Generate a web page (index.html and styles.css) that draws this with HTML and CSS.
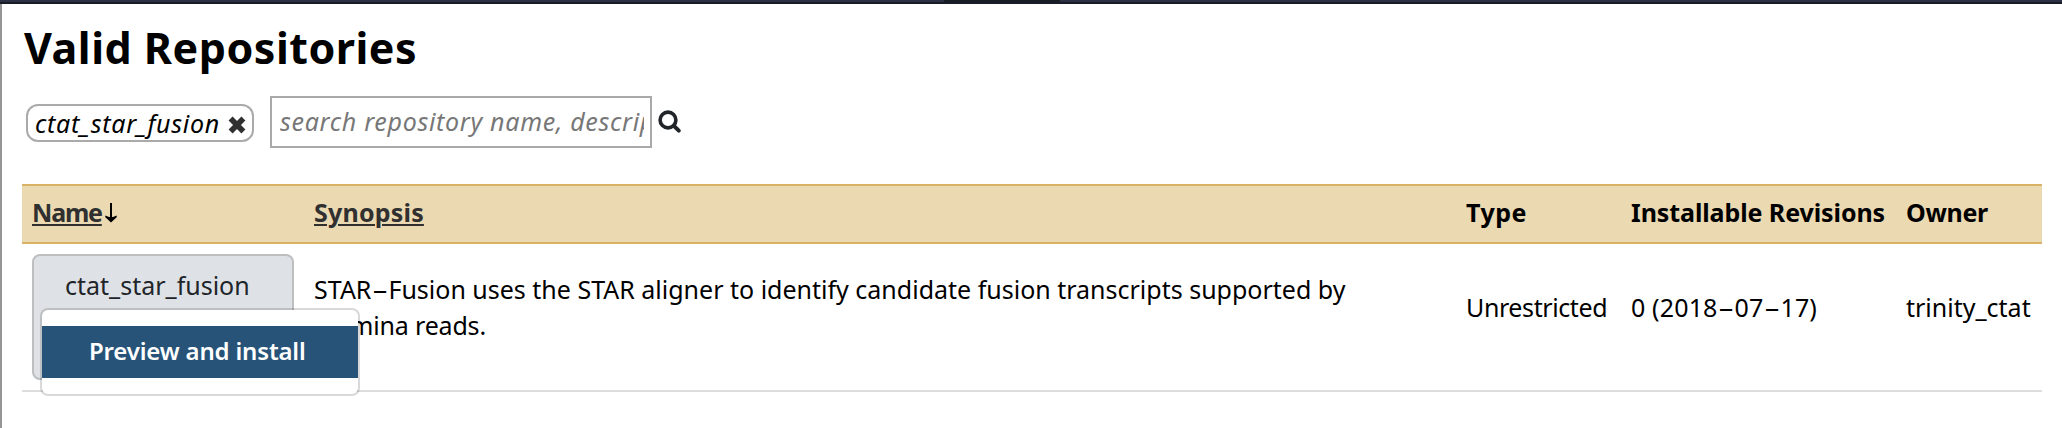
FILE: index.html
```
<!DOCTYPE html>
<html lang="en">
<head>
<meta charset="utf-8">
<title>Valid Repositories</title>
<link rel="stylesheet" href="styles.css">
</head>
<body>
<header class="masthead"><span class="masthead-tab"></span></header>
<main class="panel">
  <h2 class="title">Valid Repositories</h2>
  <div class="filters">
    <span class="tag"><span class="tag-text">ctat_star_fusion</span>
      <svg class="tag-close" viewBox="0 0 16 16"><path d="M2.3 2.3L13.7 13.7M13.7 2.3L2.3 13.7" stroke="#303030" stroke-width="5"/></svg>
    </span>
    <input class="search" type="text" placeholder="search repository name, description">
    <svg class="search-icon" viewBox="0 0 24 24"><circle cx="10" cy="10" r="7.9" fill="none" stroke="#212529" stroke-width="3.6"/><path d="M15.8 15.8L20.8 20.6" stroke="#212529" stroke-width="4" stroke-linecap="round"/></svg>
  </div>
  <table class="grid">
    <colgroup><col class="c-name"><col class="c-synopsis"><col class="c-type"><col class="c-rev"><col class="c-owner"></colgroup>
    <thead>
      <tr>
        <th><a class="sort sort-name">Name</a><svg class="arrow" viewBox="0 0 12 20"><path d="M6 0V16" stroke="#000" stroke-width="2"/><path d="M0.3 12.6Q3.5 14.2 6 14.2T11.7 12.6V14.2L6 19.4L0.3 14.2Z" fill="#000"/></svg></th>
        <th><a class="sort sort-synopsis">Synopsis</a></th>
        <th class="h-type">Type</th>
        <th class="h-rev">Installable Revisions</th>
        <th class="h-owner">Owner</th>
      </tr>
    </thead>
    <tbody>
      <tr>
        <td class="name-cell">
          <div class="repo-button">ctat_star_fusion
            <div class="popup"><a class="popup-item">Preview and install</a></div>
          </div>
        </td>
        <td>STAR<span class="dash">-</span>Fusion uses the STAR aligner to identify candidate fusion transcripts supported by <span class="tail">Illumina reads.</span></td>
        <td class="type">Unrestricted</td>
        <td class="rev">0 (2018<span class="dash">-</span>07<span class="dash">-</span>17)</td>
        <td>trinity_ctat</td>
      </tr>
    </tbody>
  </table>
</main>
</body>
</html>
```
FILE: styles.css
```
* { box-sizing: border-box; }
body {
  margin: 0;
  background: #fff;
  color: #000;
  font: 25px/36px "Noto Sans", "Open Sans", sans-serif;
  overflow: hidden;
}
.masthead {
  height: 4px;
  background: #2c3143;
  border-bottom: 2px solid #181c28;
}
.masthead-tab {
  display: block;
  width: 116px;
  height: 2px;
  margin-left: 944px;
  background: #181c24;
}
.panel {
  height: 424px;
  border-left: 2px solid #959595;
  padding: 14px 20px 0;
}
.title {
  margin: 0 0 18px 2px;
  font-size: 43px;
  line-height: 60px;
  font-weight: 700;
  letter-spacing: 0.5px;
}
.filters {
  display: flex;
  align-items: center;
  height: 52px;
  padding-left: 4px;
}
.tag {
  display: flex;
  align-items: center;
  width: 228px;
  height: 38px;
  margin: 2px 16px 0 0;
  padding: 0 6px 0 7px;
  justify-content: space-between;
  border: 2px solid #aaa;
  border-radius: 12px;
}
.tag-text {
  font-style: italic;
  letter-spacing: 0.73px;
  line-height: 34px;
}
.tag-close { width: 18px; height: 18px; margin-top: 3px; }
.search {
  width: 382px;
  height: 52px;
  margin: 0;
  padding: 0 6px 3px 8px;
  border: 2px solid #a9a9a9;
  border-radius: 0;
  background: #fff;
  font: italic 25px/36px "Noto Sans", "Open Sans", sans-serif;
  letter-spacing: 0.7px;
}
.search::placeholder { color: #777; opacity: 1; }
.search-icon { width: 24px; height: 24px; margin-left: 6px; }
.grid {
  width: 2020px;
  margin-top: 36px;
  table-layout: fixed;
  border-collapse: separate;
  border-spacing: 0;
}
.c-name { width: 282px; }
.c-synopsis { width: 1152px; }
.c-type { width: 165px; }
.c-rev { width: 275px; }
.c-owner { width: 146px; }
.grid th {
  height: 60px;
  padding: 8px 0 12px 10px;
  background: #ebd9b2;
  border-top: 2px solid #d8b365;
  border-bottom: 2px solid #d8b365;
  text-align: left;
  vertical-align: top;
  white-space: nowrap;
}
.sort {
  color: #303030;
  text-decoration: underline;
  text-decoration-thickness: 2px;
  text-underline-offset: 2px;
}
.sort-name { letter-spacing: -1.2px; }
.sort-synopsis { letter-spacing: 0.2px; }
.arrow { width: 12px; height: 20px; margin-left: 3px; vertical-align: -1px; }
.h-type { letter-spacing: 0.5px; }
.h-rev { letter-spacing: -0.09px; }
.h-owner { letter-spacing: -0.31px; }
.grid td {
  height: 148px;
  padding: 11px 10px 31px;
  border-bottom: 2px solid #ddd;
  vertical-align: middle;
}
.grid .name-cell { padding: 10px; vertical-align: top; }
.type { letter-spacing: -0.4px; }
.rev { letter-spacing: 0.15px; }
.tail { letter-spacing: -0.18px; }
.dash {
  display: inline-block;
  width: 8px;
  margin: 0 4.5px;
  text-align: center;
  transform: scaleX(2);
}
.repo-button {
  position: relative;
  width: 262px;
  height: 126px;
  padding: 11px 31px;
  border: 2px solid #bcbec0;
  border-radius: 8px;
  background: #dee2e6;
  color: #212529;
  white-space: nowrap;
}
.popup {
  position: absolute;
  left: 6px;
  top: 52px;
  width: 320px;
  height: 88px;
  padding: 16px 0;
  border: 2px solid rgba(0, 0, 0, 0.15);
  border-radius: 8px;
  background: #fff;
  background-clip: padding-box;
}
.popup-item {
  display: block;
  height: 52px;
  padding: 7px 0 0 47px;
  background: #275378;
  color: #fff;
  font-size: 24px;
  font-weight: 600;
  letter-spacing: -0.17px;
}
```
